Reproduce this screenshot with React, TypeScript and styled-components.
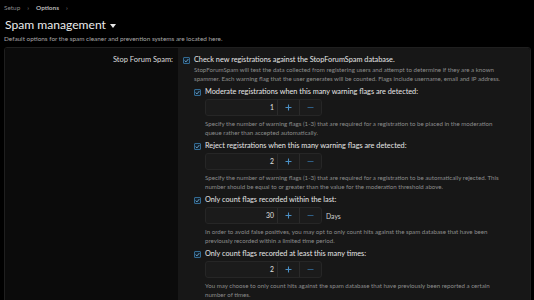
import React from "react";
import styled, { createGlobalStyle } from "styled-components";

const Global = createGlobalStyle`
  html, body { margin: 0; padding: 0; background: #000; }
  body { font-family: "Lato", "Open Sans", sans-serif; color: #d8d8d8; overflow: hidden; }
`;

const Page = styled.div`
  width: 534px;
  height: 300px;
  overflow: hidden;
`;

const Header = styled.div`
  padding: 2px 5px 4px 4px;
`;

const Crumbs = styled.div`
  display: flex;
  align-items: center;
  gap: 7px;
  font-size: 6.4px;
  color: #8a8a8a;
  height: 10px;
`;

const Crumb = styled.span<{ $strong?: boolean }>`
  font-weight: ${(p) => (p.$strong ? 700 : 400)};
  color: ${(p) => (p.$strong ? "#b8b8b8" : "#8a8a8a")};
`;

const Title = styled.h1`
  margin: 6px 0 0 1px;
  font-size: 12.1px;
  font-weight: 400;
  color: #ececec;
  display: flex;
  align-items: center;
  gap: 4px;
  line-height: 14px;
`;

const Caret = styled.span`
  width: 0;
  height: 0;
  border-left: 3.5px solid transparent;
  border-right: 3.5px solid transparent;
  border-top: 4px solid #e8e8e8;
  margin-top: 1px;
`;

const Desc = styled.div`
  font-size: 6.4px;
  color: #a8a8a8;
  margin-top: 2px;
  line-height: 9px;
  white-space: nowrap;
`;

const Block = styled.div`
  margin: 0 3px 0 4px;
  display: grid;
  grid-template-columns: 173px 1fr;
  border: 1px solid #1f1f1f;
  border-radius: 3px;
  overflow: hidden;
  min-height: 260px;
`;

const LabelCell = styled.div`
  background: #0b0b0b;
  text-align: right;
  padding: 7px 5px 0 0;
  font-size: 7.5px;
  color: #dcdcdc;
  line-height: 10px;
`;

const ContentCell = styled.div`
  background: #171717;
  padding: 7px 8px 0 5px;
`;

const CheckRow = styled.div`
  display: flex;
  align-items: flex-start;
  gap: 4px;
`;

const Box = styled.span`
  flex: none;
  width: 7px;
  height: 7px;
  border: 1px solid #336a92;
  border-radius: 1px;
  background: #13212c;
  margin-top: 1.5px;
  box-sizing: border-box;
  display: flex;
  align-items: center;
  justify-content: center;
`;

const CheckLabel = styled.div`
  font-size: 7.3px;
  line-height: 10px;
  color: #e6e6e6;
  white-space: nowrap;
`;

const Hint = styled.div<{ $indent?: number }>`
  font-size: 6.15px;
  line-height: 9px;
  color: #8c8c8c;
  white-space: nowrap;
  margin-left: ${(p) => p.$indent ?? 0}px;
`;

const Nested = styled.div`
  margin-left: 11px;
  display: flex;
  flex-direction: column;
`;

const Option = styled.div<{ $top: number }>`
  margin-top: ${(p) => p.$top}px;
`;

const SpinRow = styled.div`
  display: flex;
  align-items: center;
  gap: 4px;
  margin: 2px 0 3px 11px;
`;

const Spinner = styled.div`
  display: flex;
  width: 117px;
  height: 17px;
  border: 1px solid #262626;
  border-radius: 3px;
  background: #1b1b1b;
  box-sizing: border-box;
  overflow: hidden;
`;

const SpinValue = styled.div`
  flex: 1;
  text-align: right;
  font-size: 6.8px;
  line-height: 15px;
  padding-right: 3px;
  color: #e2e2e2;
`;

const SpinBtn = styled.div`
  width: 21px;
  display: flex;
  align-items: center;
  justify-content: center;
  border-left: 1px solid #2a2a2a;
`;

const Unit = styled.span`
  font-size: 6.8px;
  color: #d0d0d0;
`;

const Check = () => (
  <Box>
    <svg width="5" height="5" viewBox="0 0 5 5">
      <path d="M0.6 2.6 L2 3.9 L4.4 1" stroke="#6fa9d3" strokeWidth="0.9" fill="none" />
    </svg>
  </Box>
);

const Plus = () => (
  <svg width="7" height="7" viewBox="0 0 7 7">
    <path d="M3.5 0.5 V6.5 M0.5 3.5 H6.5" stroke="#4b8fc4" strokeWidth="1.1" />
  </svg>
);

const Minus = () => (
  <svg width="7" height="7" viewBox="0 0 7 7">
    <path d="M0.5 3.5 H6.5" stroke="#2f5f86" strokeWidth="1.1" />
  </svg>
);

const Spin = ({ value, unit }: { value: string; unit?: string }) => (
  <SpinRow>
    <Spinner>
      <SpinValue>{value}</SpinValue>
      <SpinBtn>
        <Plus />
      </SpinBtn>
      <SpinBtn>
        <Minus />
      </SpinBtn>
    </Spinner>
    {unit && <Unit>{unit}</Unit>}
  </SpinRow>
);

const subs = [
  {
    label: "Moderate registrations when this many warning flags are detected:",
    value: "1",
    hint: [
      "Specify the number of warning flags (1-3) that are required for a registration to be placed in the moderation",
      "queue rather than accepted automatically.",
    ],
  },
  {
    label: "Reject registrations when this many warning flags are detected:",
    value: "2",
    hint: [
      "Specify the number of warning flags (1-3) that are required for a registration to be automatically rejected. This",
      "number should be equal to or greater than the value for the moderation threshold above.",
    ],
  },
  {
    label: "Only count flags recorded within the last:",
    value: "30",
    unit: "Days",
    hint: [
      "In order to avoid false positives, you may opt to only count hits against the spam database that have been",
      "previously recorded within a limited time period.",
    ],
  },
  {
    label: "Only count flags recorded at least this many times:",
    value: "2",
    hint: [
      "You may choose to only count hits against the spam database that have previously been reported a certain",
      "number of times.",
    ],
  },
];

export default function App() {
  return (
    <Page>
      <Global />
      <Header>
        <Crumbs>
          <Crumb>Setup</Crumb>
          <Crumb>›</Crumb>
          <Crumb $strong>Options</Crumb>
          <Crumb>›</Crumb>
        </Crumbs>
        <Title>
          Spam management <Caret />
        </Title>
        <Desc>Default options for the spam cleaner and prevention systems are located here.</Desc>
      </Header>
      <Block>
        <LabelCell>Stop Forum Spam:</LabelCell>
        <ContentCell>
          <CheckRow>
            <Check />
            <CheckLabel>Check new registrations against the StopForumSpam database.</CheckLabel>
          </CheckRow>
          <Hint $indent={11}>
            StopForumSpam will test the data collected from registering users and attempt to determine if they are a known
            <br />
            spammer. Each warning flag that the user generates will be counted. Flags include username, email and IP address.
          </Hint>
          <Nested>
            {subs.map((s, i) => (
              <Option key={i} $top={4}>
                <CheckRow>
                  <Check />
                  <CheckLabel>{s.label}</CheckLabel>
                </CheckRow>
                <Spin value={s.value} unit={s.unit} />
                <Hint $indent={11}>
                  {s.hint[0]}
                  <br />
                  {s.hint[1]}
                </Hint>
              </Option>
            ))}
          </Nested>
        </ContentCell>
      </Block>
    </Page>
  );
}
